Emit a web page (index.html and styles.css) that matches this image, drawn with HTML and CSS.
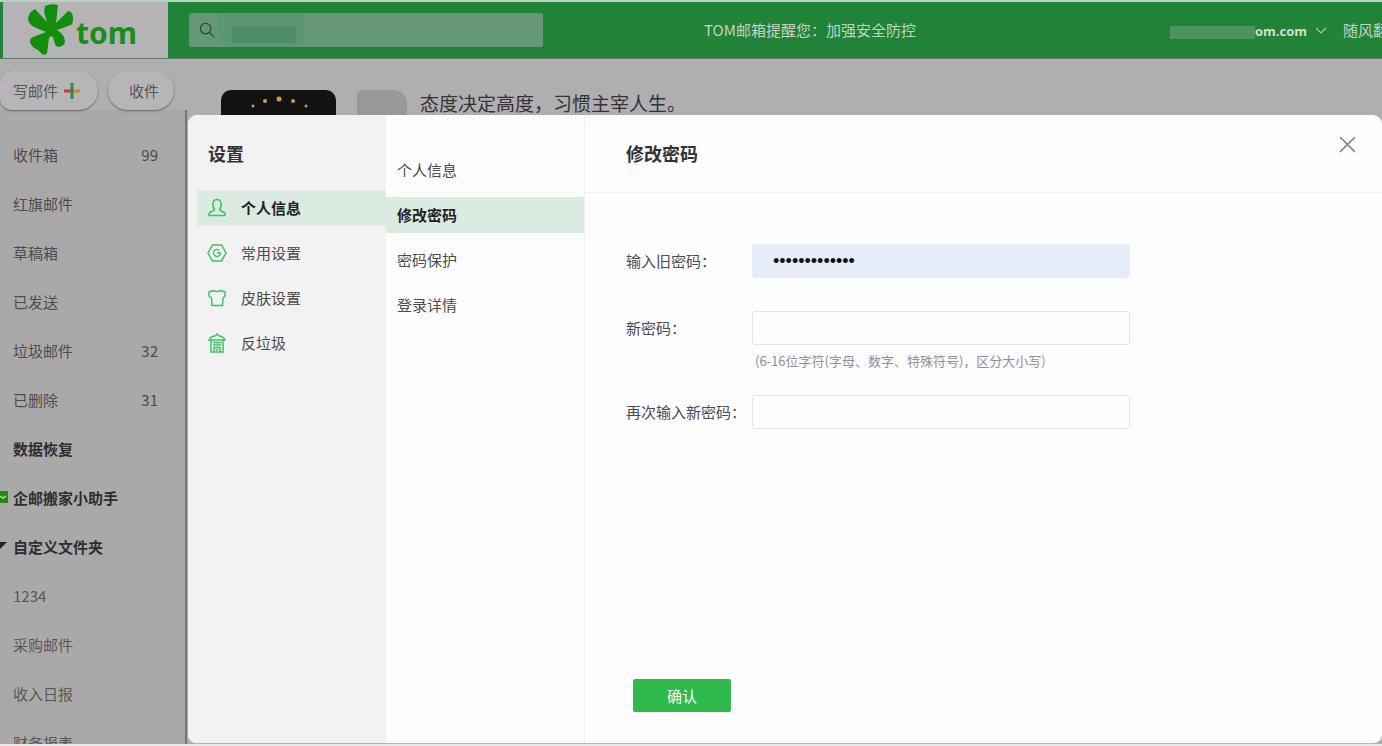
FILE: index.html
```
<!DOCTYPE html>
<html lang="zh-CN">
<head>
<meta charset="utf-8">
<title>TOM邮箱 - 设置</title>
<link rel="stylesheet" href="styles.css">
</head>
<body>
<div class="app">
  <header class="topbar">
    <a class="logo" href="#">
      <svg class="logo-mark" viewBox="0 0 46 52" aria-hidden="true">
        <path d="M17 2Q23-1 30 1L28 19L40 7Q45 8 45 14Q45 20 43 21L29 26Q37 31 37 38Q36 42 31 43Q28 43 27 40L25 33Q22 31 21 34L19 49Q18 52 14 50L10 46Q3 43 2 38Q2 34 5 33L18 28L6 23Q0 20 0 14Q1 8 7 5L19 18L16 8Z"/>
      </svg>
      <span>tom</span>
    </a>
    <label class="search">
      <svg viewBox="0 0 18 18" aria-hidden="true"><circle cx="7" cy="7" r="5.5"/><path d="M11 11l5 5"/></svg>
      <input type="text" aria-label="搜索">
      <span class="search-mask"><span></span></span>
    </label>
    <p class="notice">TOM邮箱提醒您：加强安全防控</p>
    <div class="account">
      <span class="account-mask"></span>
      <button class="account-name" type="button">om.com
        <svg viewBox="0 0 12 8" aria-hidden="true"><path d="M1 1l5 5 5-5"/></svg>
      </button>
      <a class="account-link" href="#">随风翻</a>
    </div>
  </header>

  <div class="body">
    <aside class="sidebar">
      <div class="actions">
        <button class="pill write" type="button">写邮件
          <svg viewBox="0 0 16 16" aria-hidden="true"><path d="M0 8h7" stroke="#c4432c"/><path d="M9 8h7" stroke="#d18b1c"/><path d="M8 0v16" stroke="#2c8a46"/></svg>
        </button>
        <button class="pill receive" type="button">收件</button>
      </div>
      <nav class="folders">
        <a href="#">收件箱<span>99</span></a>
        <a href="#">红旗邮件</a>
        <a href="#">草稿箱</a>
        <a href="#">已发送</a>
        <a href="#">垃圾邮件<span>32</span></a>
        <a href="#">已删除<span>31</span></a>
        <a href="#" class="strong">数据恢复</a>
        <a href="#" class="strong"><svg class="marker" viewBox="0 0 8 12" aria-hidden="true"><path d="M0 0h8v12H0z" fill="#238b10"/><path d="M0 5l3 2 3-2" fill="none" stroke="#b5d8a8" stroke-width="1.5"/></svg>企邮搬家小助手</a>
        <a href="#" class="strong"><svg class="marker" viewBox="0 0 8 12" aria-hidden="true"><path d="M0 2h7L0 9z" fill="#222"/></svg>自定义文件夹</a>
        <a href="#" class="light">1234</a>
        <a href="#" class="light">采购邮件</a>
        <a href="#" class="light">收入日报</a>
        <a href="#" class="light">财务报表</a>
      </nav>
    </aside>
    <main class="home">
      <div class="badge">
        <svg viewBox="0 0 115 30" aria-hidden="true"><g fill="#d7a02c"><circle cx="32" cy="16" r="1.5"/><circle cx="44" cy="11" r="2"/><circle cx="58" cy="9" r="2.5"/><circle cx="72" cy="11" r="2"/><circle cx="85" cy="16" r="1.5"/></g></svg>
      </div>
      <div class="name-mask"></div>
      <p class="motto">态度决定高度，习惯主宰人生。</p>
    </main>
  </div>

  <section class="dialog" role="dialog" aria-labelledby="dialog-title">
    <div class="groups">
      <h2 id="dialog-title">设置</h2>
      <nav>
        <a href="#" class="active"><svg viewBox="0 0 20 20" aria-hidden="true"><path d="M7.500 11.500C4.500 8 5.500 1.500 10 1.500S15.500 8 12.500 11.500C12.500 13.500 18 13 18 16V17.500H2V16C2 13 7.500 13.500 7.500 11.500Z"/></svg>个人信息</a>
        <a href="#"><svg viewBox="0 0 20 20" aria-hidden="true"><path d="M5.500 2h9L19 10l-4.500 8h-9L1 10z"/><path d="M12.500 7.500A3.500 3.500 0 1 0 13.500 10H10" stroke-width="1.300"/></svg>常用设置</a>
        <a href="#"><svg viewBox="0 0 20 20" aria-hidden="true"><path d="M6 2.500Q10 4.500 14 2.500L18 4V8L16 10L15.500 17.500H5L4.500 10L2 8V4Z"/></svg>皮肤设置</a>
        <a href="#"><svg viewBox="0 0 20 20" aria-hidden="true"><path d="M2 7Q4 3 8 3L10 1L12 3Q16 3 18 7ZM4 7v12h12V7M6 9.500h8M6 12h8M7 19v-4.500h6V19M9 17h2"/></svg>反垃圾</a>
      </nav>
    </div>
    <nav class="pages">
      <a href="#">个人信息</a>
      <a href="#" class="active">修改密码</a>
      <a href="#">密码保护</a>
      <a href="#">登录详情</a>
    </nav>
    <div class="panel">
      <div class="panel-head">
        <h3>修改密码</h3>
        <button class="close" type="button" aria-label="关闭"><svg viewBox="0 0 16 16" aria-hidden="true"><path d="M1 1l14 14M15 1L1 15"/></svg></button>
      </div>
      <form class="form">
        <div class="row">
          <label for="old">输入旧密码：</label>
          <input class="filled" id="old" type="password" value="abcdefghijklm">
        </div>
        <div class="row">
          <label for="new">新密码：</label>
          <input id="new" type="password">
          <p class="hint">(6-16位字符(字母、数字、特殊符号)，区分大小写)</p>
        </div>
        <div class="row">
          <label for="again">再次输入新密码：</label>
          <input id="again" type="password">
        </div>
        <button class="submit" type="button">确认</button>
      </form>
    </div>
  </section>
</div>
</body>
</html>
```
FILE: styles.css
```
* { box-sizing: border-box; }
body {
  margin: 0;
  font: 15px/24px "Noto Sans CJK SC", sans-serif;
  color: #555;
  background: #b0aeb0;
}
h2, h3, p { margin: 0; }
a { color: inherit; text-decoration: none; }
button, input { font: inherit; color: inherit; }
button { border: 0; padding: 0; background: none; cursor: pointer; }
svg { fill: none; flex: none; }

.app {
  position: relative;
  display: flex;
  flex-direction: column;
  height: 100vh;
  overflow: hidden;
  border-bottom: 2px solid #e8e8e8;
}

/* Top bar */
.topbar {
  flex: none;
  display: flex;
  align-items: center;
  height: 59px;
  border-top: 2px solid #b9d5c2;
  border-bottom: 1px solid #5b7f65;
  background: #218338;
  color: #c2d3c4;
}
.logo {
  display: flex;
  align-items: center;
  gap: 2px;
  align-self: stretch;
  width: 165px;
  margin-left: 3px;
  padding-left: 25px;
  background: #b5b3b5;
  color: #169016;
  font: bold 30px/40px "Noto Sans", sans-serif;
}
.logo span { padding-top: 6px; }
.logo-mark { width: 46px; height: 52px; fill: #108e0c; }
.search {
  position: relative;
  display: flex;
  align-items: center;
  width: 354px;
  height: 34px;
  margin-left: 21px;
  padding-left: 10px;
  border-radius: 3px;
  background: #659678;
}
.search > svg { width: 17px; height: 17px; stroke: #234f30; stroke-width: 1.3; }
.search input { flex: 1; min-width: 0; border: 0; outline: 0; background: none; }
.search-mask {
  position: absolute;
  left: 29px;
  top: 1px;
  width: 86px;
  height: 33px;
  padding: 12px 0 0 14px;
  border-radius: 0 0 16px 16px;
  background: #5c9772;
}
.search-mask span { display: block; width: 64px; height: 17px; background: #4f8d68; }
.notice { margin-left: 161px; white-space: nowrap; }
.account { display: flex; align-items: center; margin-left: auto; }
.account-mask { width: 85px; height: 13px; margin-top: 4px; background: #4d9560; }
.account-name {
  display: flex;
  align-items: center;
  gap: 8px;
  padding-top: 2px;
  color: #d3dfd4;
  font: bold 13px/24px "Open Sans", sans-serif;
}
.account-name svg { width: 12px; height: 8px; stroke: #a9c9ae; stroke-width: 1.2; }
.account-link { width: 39px; margin-left: 16px; overflow: hidden; white-space: nowrap; }

/* Mail sidebar */
.body { flex: 1; min-height: 0; display: flex; }
.sidebar { flex: none; width: 188px; background: #aaa9aa; }
.actions {
  display: flex;
  gap: 10px;
  height: 51px;
  padding-top: 12px;
  background: #b0aeb0;
}
.pill {
  height: 39px;
  border-radius: 20px;
  background: #b7b5b7;
  box-shadow: 0 1px 2px #656565;
}
.write {
  display: flex;
  align-items: center;
  gap: 6px;
  width: 98px;
  padding-left: 13px;
  border-radius: 12px 20px 20px 12px;
}
.write svg { width: 16px; height: 16px; stroke-width: 3; }
.receive { width: 66px; padding-left: 6px; }
.folders {
  padding-top: 20px;
  border-right: 2px solid #747574;
  margin-right: 1px;
}
.folders a {
  position: relative;
  display: flex;
  align-items: center;
  justify-content: space-between;
  height: 49px;
  padding: 0 27px 0 13px;
  color: #4c4c4c;
}
.folders .strong { color: #2e2e2e; font-weight: bold; }
.folders .light { color: #585758; }
.marker { position: absolute; left: 0; top: 18px; width: 8px; height: 12px; }

/* Page behind the dialog */
.home { display: flex; flex: 1; padding: 31px 0 0 33px; }
.badge { width: 115px; height: 30px; border-radius: 10px 10px 0 0; background: #121212; }
.badge svg { display: block; width: 115px; height: 30px; }
.name-mask {
  width: 50px;
  height: 30px;
  margin-left: 21px;
  border-radius: 6px 14px 0 0;
  background: #98979a;
}
.motto { margin-left: 13px; color: #333; font-size: 19px; line-height: 26px; white-space: nowrap; }

/* Settings dialog */
.dialog {
  position: absolute;
  inset: 115px 0 0 188px;
  display: flex;
  overflow: hidden;
  border-bottom: 1px solid #b5b4b6;
  border-radius: 9px;
  background: #fdfcfe;
  color: #4c4c4c;
}
.groups { width: 198px; background: #f2f1f4; }
.groups h2, .panel h3 { color: #333; font-size: 18px; line-height: 28px; }
.groups h2 { padding: 24px 0 23px 20px; }
.groups nav { display: grid; gap: 9px; padding-left: 9px; }
.groups a {
  display: flex;
  align-items: center;
  gap: 14px;
  height: 36px;
  padding-left: 10px;
}
.groups a svg { width: 20px; height: 20px; stroke: #3bc65d; stroke-width: 1.5; }
.dialog .active { background: #dcebe1; color: #222; font-weight: bold; }
.pages {
  display: grid;
  align-content: start;
  gap: 9px;
  width: 199px;
  padding-top: 37px;
  border-right: 1px solid #f1f1f4;
}
.pages a { height: 36px; padding: 0 11px; line-height: 36px; }
.panel { flex: 1; display: flex; flex-direction: column; }
.panel-head {
  display: flex;
  align-items: flex-start;
  justify-content: space-between;
  height: 78px;
  padding: 21px 26px 0 41px;
  border-bottom: 1px solid #f1f1f4;
}
.panel h3 { padding-top: 3px; }
.close { display: grid; }
.close svg { width: 17px; height: 17px; stroke: #85858a; stroke-width: 1.5; }
.form {
  flex: 1;
  display: flex;
  flex-direction: column;
  padding: 51px 41px 31px;
}
.row {
  display: grid;
  grid-template-columns: 126px minmax(0, 378px);
  align-items: center;
  margin-bottom: 33px;
}
.row:nth-child(2) { margin-bottom: 24px; }
.row label { white-space: nowrap; }
.row input {
  height: 34px;
  padding: 0 20px;
  border: 1px solid #e3e3e7;
  border-radius: 3px;
  outline: 0;
  background: #fdfcfe;
  color: #111;
  font: 18px/24px "Liberation Sans", sans-serif;
}
.row .filled { border-color: #e6ecfa; background: #e6ecfa; }
.hint {
  grid-column: 2;
  padding: 6px 0 0 3px;
  color: #919097;
  font-size: 13px;
  line-height: 20px;
  white-space: nowrap;
}
.submit {
  width: 98px;
  height: 33px;
  margin: auto 0 0 7px;
  border-radius: 2px;
  background: #2eb94d;
  color: #fff;
}
```
